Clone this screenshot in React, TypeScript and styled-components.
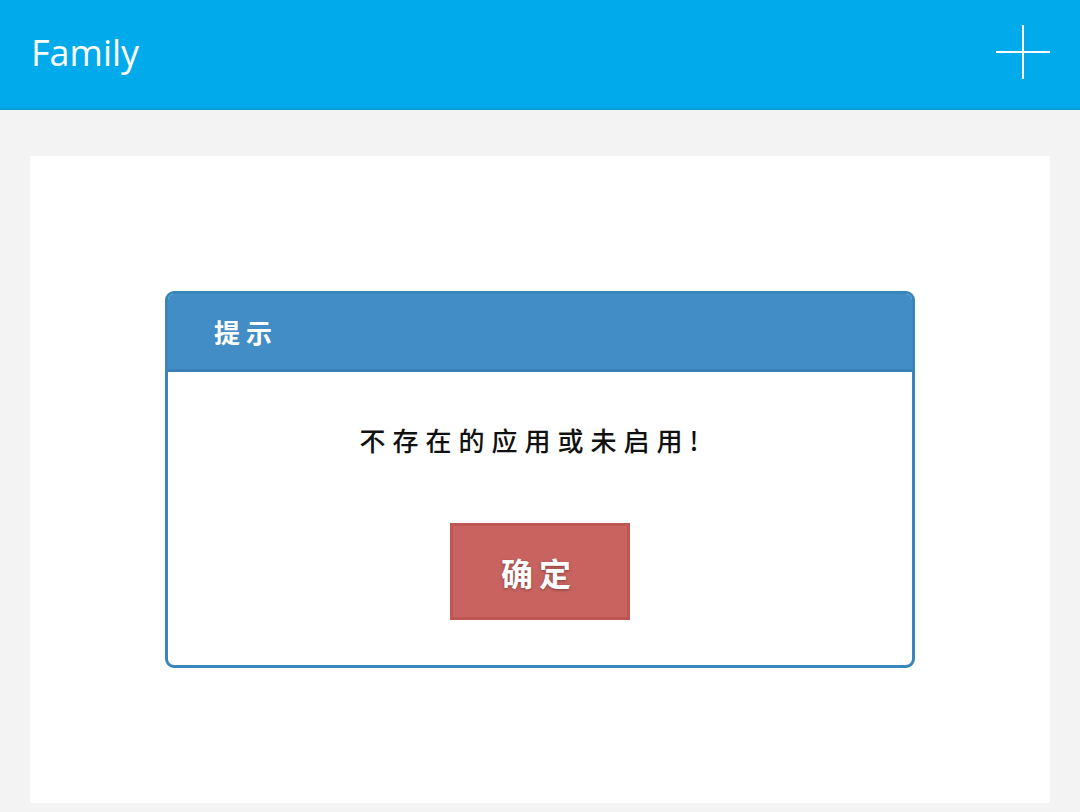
import React from 'react';
import styled, { createGlobalStyle } from 'styled-components';

const GlobalStyle = createGlobalStyle`
    html, body {
        margin: 0;
        padding: 0;
        background: #f3f3f3;
        font-family: "Noto Sans", "Noto Sans CJK SC", sans-serif;
    }
`;

const Page = styled.div`
    width: 1080px;
    height: 812px;
    display: flex;
    flex-direction: column;
    background: #f3f3f3;
    overflow: hidden;
`;

const TopBar = styled.div`
    height: 108px;
    background: #00aaeb;
    border-bottom: 2px solid #0b9fd6;
    display: flex;
    align-items: center;
    justify-content: space-between;
    padding: 0 29px 0 31px;
    flex-shrink: 0;
`;

const Title = styled.div`
    color: #fff;
    font-size: 36px;
    font-weight: 500;
    font-family: "Open Sans", "Noto Sans", sans-serif;
    padding-bottom: 4px;
`;

const AddButton = styled.button`
    width: 56px;
    height: 56px;
    padding: 0;
    margin-bottom: 4px;
    border: none;
    background: transparent;
    display: flex;
    align-items: center;
    justify-content: center;
`;

const Body = styled.div`
    flex: 1;
    padding: 46px 30px 9px 30px;
    display: flex;
`;

const Card = styled.div`
    flex: 1;
    background: #fff;
    display: flex;
    justify-content: center;
    padding-top: 135px;
`;

const Dialog = styled.div`
    width: 744px;
    height: 371px;
    border: 3px solid #3a86bb;
    border-radius: 9px;
    overflow: hidden;
    display: flex;
    flex-direction: column;
`;

const DialogHead = styled.div`
    height: 75px;
    background: #428dc5;
    border-bottom: 3px solid #3a80b6;
    display: flex;
    align-items: center;
    padding-left: 46px;
    color: #fff;
    font-size: 26px;
    font-weight: 700;
    letter-spacing: 6px;
    font-family: "Noto Sans CJK SC", sans-serif;
`;

const DialogBody = styled.div`
    flex: 1;
    display: flex;
    flex-direction: column;
    align-items: center;
    padding-top: 49px;
`;

const Message = styled.div`
    font-size: 26px;
    font-weight: 500;
    letter-spacing: 7px;
    padding-right: 15px;
    color: #111;
    font-family: "Noto Sans CJK SC", sans-serif;
    margin-bottom: 65px;
`;

const ConfirmButton = styled.button`
    width: 180px;
    height: 97px;
    background: #c9635f;
    border: 3px solid #be5652;
    color: #fff;
    font-size: 32px;
    font-weight: 700;
    letter-spacing: 6px;
    padding-left: 4px;
    font-family: "Noto Sans CJK SC", sans-serif;
    text-shadow: 0 1px 3px rgba(0, 0, 0, 0.35);
`;

const PlusIcon = () => (
    <svg width="56" height="56" viewBox="0 0 56 56">
        <path d="M28 1v54M1 28h54" stroke="#fff" strokeWidth="2" fill="none" />
    </svg>
);

export default function App() {
    return (
        <Page>
            <GlobalStyle />
            <TopBar>
                <Title>Family</Title>
                <AddButton><PlusIcon /></AddButton>
            </TopBar>
            <Body>
                <Card>
                    <Dialog>
                        <DialogHead>提示</DialogHead>
                        <DialogBody>
                            <Message>不存在的应用或未启用!</Message>
                            <ConfirmButton>确定</ConfirmButton>
                        </DialogBody>
                    </Dialog>
                </Card>
            </Body>
        </Page>
    );
}
